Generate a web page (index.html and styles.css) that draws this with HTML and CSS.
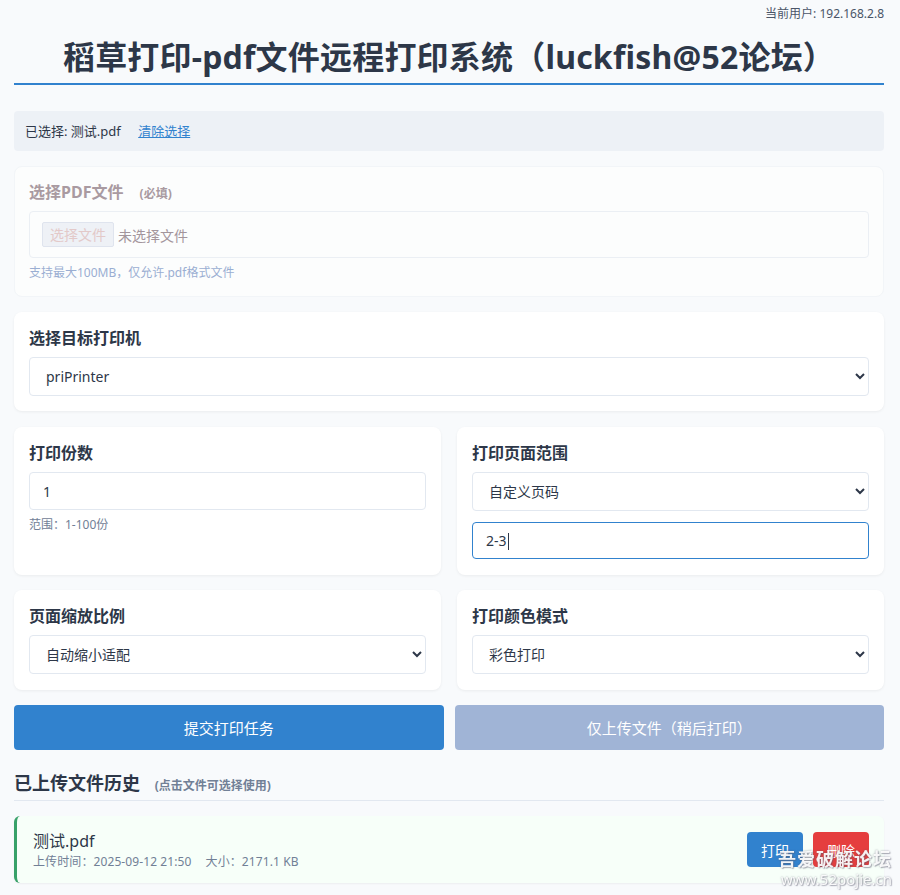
FILE: index.html
```html
<!DOCTYPE html>
<html lang="zh-CN">
<head>
<meta charset="utf-8">
<title>稻草打印-pdf文件远程打印系统</title>
<link rel="stylesheet" href="styles.css">
</head>
<body>
<div class="page">
  <div class="user">当前用户: 192.168.2.8</div>
  <h1 class="title">稻草打印-pdf文件远程打印系统（luckfish@52论坛）</h1>

  <div class="selected">已选择: 测试.pdf <a class="clear" href="#">清除选择</a></div>

  <div class="card card-file">
    <div class="label label-file">选择PDF文件 <span class="req">(必填)</span></div>
    <div class="filebox"><span class="filebtn">选择文件</span><span class="nofile">未选择文件</span></div>
    <div class="hint hint-file">支持最大100MB，仅允许.pdf格式文件</div>
  </div>

  <div class="card">
    <div class="label">选择目标打印机</div>
    <select class="field sel"><option>priPrinter</option></select>
  </div>

  <div class="grid">
    <div class="card">
      <div class="label">打印份数</div>
      <input class="field inp" type="text" value="1">
      <div class="hint">范围：1-100份</div>
    </div>
    <div class="card">
      <div class="label">打印页面范围</div>
      <select class="field sel"><option>自定义页码</option></select>
      <div class="field inp focus">2-3<span class="caret"></span></div>
    </div>
  </div>

  <div class="grid grid-2">
    <div class="card">
      <div class="label">页面缩放比例</div>
      <select class="field sel"><option>自动缩小适配</option></select>
    </div>
    <div class="card">
      <div class="label">打印颜色模式</div>
      <select class="field sel"><option>彩色打印</option></select>
    </div>
  </div>

  <div class="actions">
    <button class="btn btn-primary">提交打印任务</button>
    <button class="btn btn-disabled">仅上传文件（稍后打印）</button>
  </div>

  <h2 class="history-title">已上传文件历史 <span class="sub">(点击文件可选择使用)</span></h2>

  <div class="item">
    <div class="item-info">
      <div class="item-name">测试.pdf</div>
      <div class="item-meta"><span>上传时间：2025-09-12 21:50</span><span>大小：2171.1 KB</span></div>
    </div>
    <div class="item-btns">
      <button class="sbtn sbtn-print">打印</button>
      <button class="sbtn sbtn-del">删除</button>
    </div>
  </div>
</div>
<div class="watermark"><div class="wm1">吾爱破解论坛</div><div class="wm2">www.52pojie.cn</div></div>
</body>
</html>
```

FILE: styles.css
```css
* { box-sizing: border-box; }
html, body { margin: 0; padding: 0; }
body {
  background: #f8fafc;
  font-family: "Noto Sans", "Noto Sans CJK SC", sans-serif;
  color: #2d3748;
  width: 900px;
  height: 895px;
  overflow: hidden;
}
.page { padding: 0 16px 0 14px; }

.user {
  text-align: right;
  font-size: 12px;
  line-height: 16px;
  padding-top: 6px;
  color: #4a5568;
}
.title {
  margin: 13px 0 0;
  font-size: 32px;
  line-height: 44px;
  height: 50px;
  font-weight: 700;
  text-align: center;
  letter-spacing: 0.2px;
  color: #2d3748;
  padding-bottom: 4px;
  border-bottom: 2px solid #3182ce;
}

.selected {
  margin-top: 26px;
  height: 40px;
  line-height: 40px;
  padding: 0 11px;
  background: #edf1f6;
  border-radius: 4px;
  font-size: 13px;
  color: #2d3748;
}
.clear { color: #3182ce; text-decoration: underline; margin-left: 14px; }

.card {
  margin-top: 15px;
  background: #fff;
  border-radius: 8px;
  padding: 15px 15px 15px;
  box-shadow: 0 1px 3px rgba(0,0,0,0.06);
  display: flex;
  flex-direction: column;
}
.card-file {
  height: 131px;
  background: #fcfdfd;
  box-shadow: none;
  border: 1px solid #f2f5f8;
  padding: 14px 14px 0;
}
.label {
  font-size: 16px;
  line-height: 22px;
  height: 22px;
  font-weight: 700;
  color: #2d3748;
  margin-bottom: 8px;
  white-space: nowrap;
}
.label-file { color: #a99aa1; }
.req { font-size: 12px; line-height: 1; margin-left: 12px; }

.filebox {
  height: 47px;
  flex: none;
  border: 1px solid #ebeff4;
  border-radius: 4px;
  display: flex;
  align-items: center;
  padding-left: 12px;
  font-size: 14px;
}
.filebtn {
  height: 25px;
  line-height: 23px;
  padding: 0 7px;
  background: #eef1f6;
  border: 1px solid #dfe4ee;
  border-radius: 2px;
  color: #e3c9c9;
  margin-right: 4px;
}
.nofile { color: #a3959c; }

.hint {
  font-size: 12px;
  line-height: 16px;
  height: 16px;
  margin-top: 7px;
  color: #718096;
}
.hint-file { color: #9aaed2; }

.field {
  display: block;
  width: 100%;
  flex: none;
  font-family: inherit;
  font-size: 14px;
  color: #2d3748;
  background: #fff;
  border: 1px solid #e2e8f0;
  border-radius: 4px;
}
.sel { height: 39px; padding: 0 6px 0 12px; }
.inp { height: 38px; line-height: 36px; padding: 0 13px; }
.focus { margin-top: 11px; height: 37px; line-height: 35px; border-color: #3182ce; }
.caret {
  display: inline-block;
  width: 1px;
  height: 17px;
  background: #2d3748;
  vertical-align: -4px;
  margin-left: 1px;
}

.grid {
  display: grid;
  grid-template-columns: 1fr 1fr;
  gap: 16px;
  margin-top: 16px;
}
.grid-2 { margin-top: 15px; }
.grid .card { margin-top: 0; padding-bottom: 16px; }

.actions {
  display: flex;
  gap: 11px;
  margin-top: 15px;
}
.btn {
  flex: 1;
  height: 45px;
  border: none;
  border-radius: 4px;
  color: #fff;
  font-family: inherit;
  font-size: 15px;
}
.btn-primary { background: #3182ce; }
.btn-disabled { background: #a0b4d6; }

.history-title {
  margin: 21px 0 0;
  font-size: 18px;
  line-height: 24px;
  height: 30px;
  font-weight: 700;
  padding-bottom: 5px;
  border-bottom: 1px solid #e2e8f0;
  white-space: nowrap;
}
.sub { font-size: 12px; line-height: 1; color: #718096; margin-left: 10px; }

.item {
  margin-top: 15px;
  height: 67px;
  background: #f7fff9;
  border-left: 3px solid #38a169;
  border-radius: 6px;
  box-shadow: 0 1px 2px rgba(0,0,0,0.05);
  display: flex;
  align-items: center;
  justify-content: space-between;
  padding: 0 15px 0 16px;
}
.item-name { font-size: 16px; line-height: 24px; color: #2d3748; }
.item-meta {
  font-size: 12px;
  line-height: 18px;
  color: #718096;
  display: flex;
  gap: 14px;
  letter-spacing: 0.1px;
}
.item-btns { display: flex; gap: 10px; }
.sbtn {
  width: 56px;
  height: 35px;
  border: none;
  border-radius: 4px;
  color: #fff;
  font-family: inherit;
  font-size: 14px;
}
.sbtn-print { background: #3182ce; }
.sbtn-del { background: #e53e3e; }

.watermark {
  position: fixed;
  right: 8px;
  bottom: 7px;
  color: rgba(255,255,255,0.92);
  text-shadow: 0 0 2px rgba(90,90,110,0.6), 1px 1px 1px rgba(90,90,110,0.4);
  text-align: right;
  pointer-events: none;
}
.wm1 { font-size: 18px; line-height: 22px; font-weight: 700; letter-spacing: 1px; }
.wm2 { font-size: 15px; line-height: 18px; }
```
